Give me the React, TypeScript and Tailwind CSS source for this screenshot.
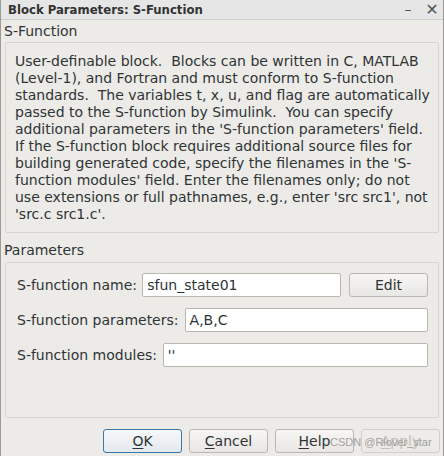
import React from "react";

const DESC = [
  "User-definable block.  Blocks can be written in C, MATLAB",
  "(Level-1), and Fortran and must conform to S-function",
  "standards.  The variables t, x, u, and flag are automatically",
  "passed to the S-function by Simulink.  You can specify",
  "additional parameters in the 'S-function parameters' field.",
  "If the S-function block requires additional source files for",
  "building generated code, specify the filenames in the 'S-",
  "function modules' field. Enter the filenames only; do not",
  "use extensions or full pathnames, e.g., enter 'src src1', not",
  "'src.c src1.c'.",
];

function Field({ value, className }: { value: string; className: string }) {
  return (
    <div
      className={`h-6 bg-white border border-[#b9b5af] rounded-[2px] px-[4px] flex items-center text-[14px] text-[#2e3436] ${className}`}
    >
      {value}
    </div>
  );
}

function Btn({
  children,
  primary,
  disabled,
}: {
  children: React.ReactNode;
  primary?: boolean;
  disabled?: boolean;
}) {
  return (
    <button
      className={`w-[79px] h-6 rounded-[3px] border text-[14px] flex items-center justify-center bg-gradient-to-b ${
        primary
          ? "border-[#3a76a8] from-[#f6f8fa] to-[#e4e9ee] text-[#2e3436]"
          : disabled
          ? "border-[#d3d0cb] from-[#efedea] to-[#ebe9e6] text-[#c3c0bb]"
          : "border-[#bab6b1] from-[#f7f6f5] to-[#e9e7e4] text-[#2e3436]"
      }`}
    >
      {children}
    </button>
  );
}

export default function App() {
  return (
    <div
      className="w-[444px] h-[456px] bg-[#edebe7] border-x border-[#9c9a97] flex flex-col overflow-hidden relative text-[#2e3436]"
      style={{ fontFamily: '"DejaVu Sans", sans-serif' }}
    >
      {/* title bar */}
      <div className="h-[20px] shrink-0 bg-[#e6e6e6] border-b border-[#cfcfcf] flex items-center pl-[7px] pr-[4px]">
        <span
          className="font-bold text-[13px] text-[#333] flex-1 leading-none"
          style={{ fontFamily: '"DejaVu Sans Condensed", "DejaVu Sans", sans-serif' }}
        >
          Block Parameters: S-Function
        </span>
        <span className="text-[#555] text-[14px] w-[14px] text-center mr-[10px]">–</span>
        <span className="text-[#555] text-[16px] font-bold w-[14px] text-center leading-none">✕</span>
      </div>

      <div className="h-[22px] shrink-0 flex items-center pl-[3px] text-[14px]">S-Function</div>

      {/* description */}
      <div className="mx-[4px] h-[191px] shrink-0 border border-[#d8d5d0] rounded-[2px] pl-[9px] pt-[1px]">
        {DESC.map((l, i) => (
          <div key={i} className="whitespace-pre text-[14px] leading-[17px] h-[17px] first:mt-[9px]">
            {l}
          </div>
        ))}
      </div>

      <div className="h-[28px] shrink-0 flex items-center pl-[3px] pt-[6px] text-[14px]">Parameters</div>

      {/* parameters */}
      <div className="mx-[4px] mt-[1px] h-[156px] shrink-0 border border-[#d8d5d0] rounded-[2px] pt-[10px] pl-[11px] pr-[10px] flex flex-col gap-[11px]">
        <div className="flex items-center text-[14px]">
          <span className="w-[126px]">S-function name:</span>
          <Field value="sfun_state01" className="w-[200px]" />
          <div className="ml-[8px]">
            <Btn>Edit</Btn>
          </div>
        </div>
        <div className="flex items-center text-[14px]">
          <span className="w-[168px]">S-function parameters:</span>
          <Field value="A,B,C" className="w-[244px]" />
        </div>
        <div className="flex items-center text-[14px]">
          <span className="w-[146px]">S-function modules:</span>
          <Field value="''" className="w-[266px]" />
        </div>
      </div>

      {/* buttons */}
      <div className="mt-[11px] flex justify-end gap-[7px] pr-[3px]">
        <Btn primary>
          <span className="underline underline-offset-2">O</span>K
        </Btn>
        <Btn>
          <span className="underline underline-offset-2">C</span>ancel
        </Btn>
        <Btn>
          <span className="underline underline-offset-2">H</span>elp
        </Btn>
        <Btn disabled>
          <span className="underline underline-offset-2">A</span>pply
        </Btn>
      </div>

      <span
        className="absolute left-[329px] top-[434px] text-[11px] text-[#a3a19e] whitespace-pre pointer-events-none"
        style={{ fontFamily: '"Liberation Sans", sans-serif' }}
      >
        CSDN @Rlover_star
      </span>
    </div>
  );
}
